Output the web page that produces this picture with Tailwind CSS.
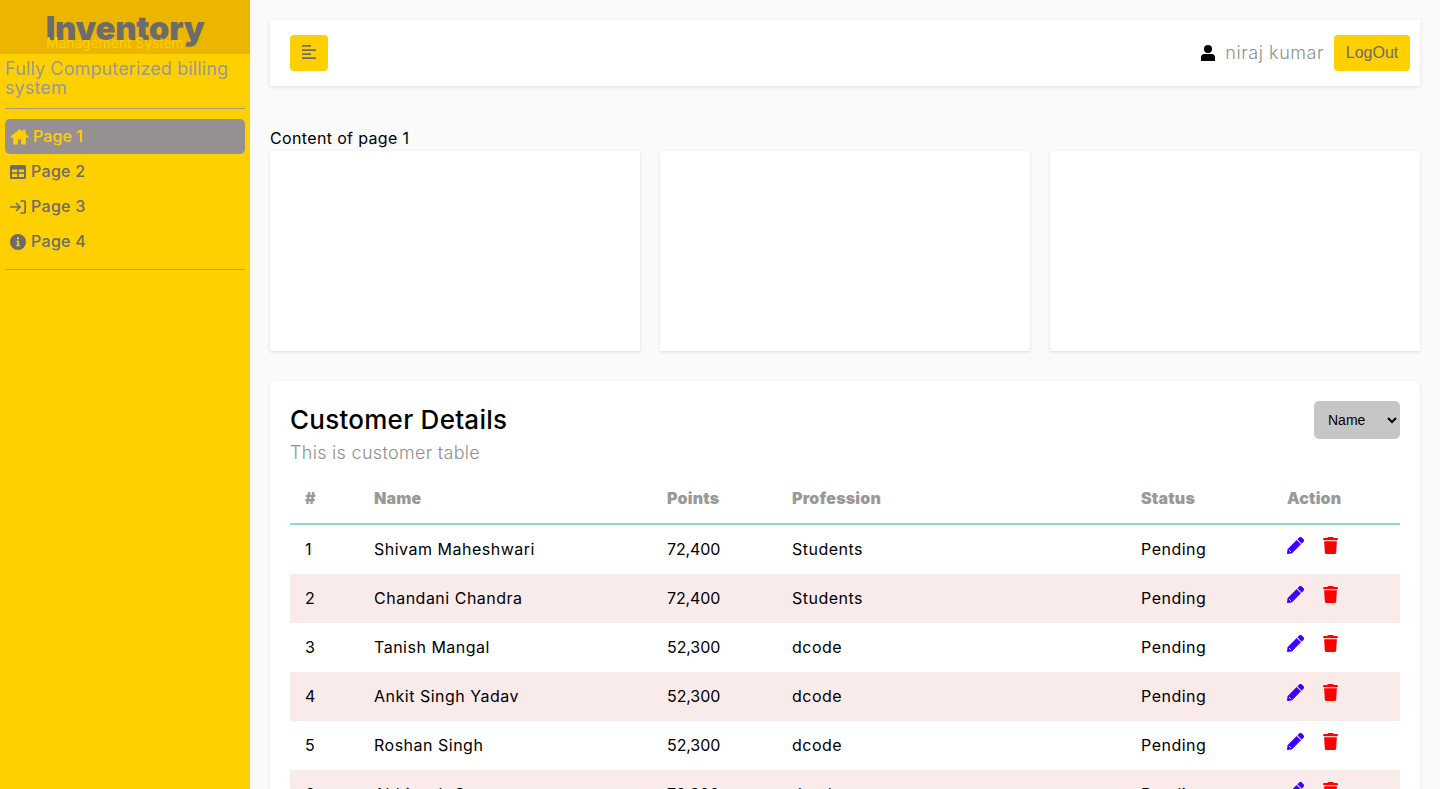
<!DOCTYPE html>
<html lang="en">
  <head>
    <meta charset="UTF-8" />
    <meta name="viewport" content="width=device-width, initial-scale=1.0" />
    <title>Inventory Management System</title>
    <script src="https://cdn.jsdelivr.net/npm/@tailwindcss/browser@4"></script>
  </head>
  <body class="h-screen overflow-hidden bg-[#fafafa] text-black font-['Inter',sans-serif] flex">
    <svg class="hidden">
      <symbol id="pencil" viewBox="0 0 512 512"><path fill="#3d00ff" d="M362 19a64 64 0 0 1 91 0l40 40a64 64 0 0 1 0 91l-50 50L312 69zM290 91 421 222 160 483c-7 7-15 12-25 15L24 511a18 18 0 0 1-23-23l13-111c3-10 8-18 15-25z"/><path d="M62 392 120 450" stroke="#ffffff" stroke-width="26" fill="none"/></symbol>
      <symbol id="trash" viewBox="0 0 448 512"><path fill="#ff0000" d="M135 18C140 7 151 0 163 0h122c12 0 23 7 28 18l7 14h96a32 32 0 0 1 0 64H32a32 32 0 0 1 0-64h96zM32 128h384l-21 339c-2 25-23 45-48 45H101c-25 0-46-20-48-45z"/></symbol>
    </svg>

    <!-- sidebar -->
    <aside class="w-[250px] shrink-0 h-full bg-[#ffd000]">
      <div class="h-[54px] bg-[#ecb500] flex flex-col items-center overflow-hidden pt-[9px]">
        <div class="w-[160px] h-[36px] relative">
          <div class="text-[33px] leading-[38px] font-black text-[#6c6c6c] tracking-[-0.3px] whitespace-nowrap text-center">Inventory</div>
          <div class="absolute left-[1px] top-[25px] text-[13.8px] leading-[18px] text-[#ffd000] whitespace-nowrap">Management System</div>
        </div>
      </div>
      <div class="px-[5px]">
        <p class="text-[18px] leading-[19px] text-[#999999] tracking-[0.12px] pt-[5px] pb-[11px] border-b border-[#a29c87]">Fully Computerized billing system</p>
        <nav class="pt-[10px] pb-[10px] border-b border-[#a29c87] flex flex-col gap-0">
          <a class="h-[35px] rounded-[5px] bg-[#979090] text-[#ffd000] flex items-center pl-[5px] gap-[5px] text-[16px] font-medium tracking-[0.1px]">
            <svg viewBox="0 0 24 24" class="w-[19px] h-[19px]" fill="currentColor"><path d="M12 2.500 0.500 12.400 1.800 14 4 12.200V22h6v-6.500h4V22h6v-9.800l2.200 1.800 1.300-1.600L19.500 8.200V3.500h-3v2.100z"/></svg>
            <span class="-ml-[1px] pb-[2px]">Page 1</span>
          </a>
          <a class="h-[35px] text-[#6c6c6c] flex items-center pl-[5px] gap-[5px] text-[16px] font-medium tracking-[0.3px]">
            <svg viewBox="0 0 16 14" class="w-[16px] h-[14px]" fill="currentColor"><path fill-rule="evenodd" d="M1.500 0h13A1.500 1.500 0 0 1 16 1.500v11a1.500 1.500 0 0 1-1.500 1.500h-13A1.500 1.500 0 0 1 0 12.500v-11A1.500 1.500 0 0 1 1.500 0zM2 4.500v2.700h5.200V4.500zm6.800 0v2.700H14V4.500zM2 8.800V12h5.200V8.800zm6.800 0V12H14V8.800z"/></svg>
            <span class="pb-[2px]">Page 2</span>
          </a>
          <a class="h-[35px] text-[#6c6c6c] flex items-center pl-[5px] gap-[5px] text-[16px] font-medium tracking-[0.3px]">
            <svg viewBox="0 0 16 14" class="w-[16px] h-[14px]" fill="none" stroke="currentColor" stroke-width="1.700"><path d="M0 7h9.500M6 3l4 4-4 4"/><path d="M10.500 1H14a1.200 1.200 0 0 1 1.200 1.200v9.600A1.200 1.200 0 0 1 14 13h-3.500"/></svg>
            <span class="pb-[2px]">Page 3</span>
          </a>
          <a class="h-[35px] text-[#6c6c6c] flex items-center pl-[5px] gap-[5px] text-[16px] font-medium tracking-[0.3px]">
            <svg viewBox="0 0 16 16" class="w-[16px] h-[16px]"><circle cx="8" cy="8" r="8" fill="currentColor"/><path d="M7 3.200h2v2H7zM6.500 6.700h2.500v4.300h.8v1.300H6.300V11h.9V8h-.7z" fill="#ffd000"/></svg>
            <span class="pb-[1px]">Page 4</span>
          </a>
        </nav>
      </div>
    </aside>

    <!-- main -->
    <main class="flex-1 min-w-0 pl-[20px] pr-[20px] pt-[20px]">
      <header class="h-[66px] bg-white shadow-[0_1px_4px_rgba(0,0,0,0.1)] flex items-center justify-between pl-[20px] pr-[10px]">
        <button class="w-[38px] h-[36px] rounded-[4px] bg-[#ffd000] flex items-center justify-center">
          <svg viewBox="0 0 14 14" class="w-[14px] h-[14px] -mt-[2px]" fill="#6c6c6c"><path d="M0 0h9v1.700H0zM0 4.300h14V6H0zM0 8.300h9V10H0zM0 12.300h14V14H0z"/></svg>
        </button>
        <div class="flex items-center">
          <svg viewBox="0 0 14 16" class="w-[14px] h-[16px] mr-[10px]" fill="#000"><circle cx="7" cy="4" r="4"/><path d="M3.500 9h7A3.500 3.500 0 0 1 14 12.500V16H0v-3.500A3.500 3.500 0 0 1 3.500 9z"/></svg>
          <span class="text-[18px] font-light tracking-[0.55px] text-[#8f8f8f] mr-[10px] pb-[2px]">niraj kumar</span>
          <button class="w-[76px] h-[36px] rounded-[4px] bg-[#ffd000] text-[#6c6c6c] text-[16px] font-['Liberation_Sans',sans-serif]">LogOut</button>
        </div>
      </header>

      <p class="mt-[40px] text-[16px] leading-[24px] h-[25px] tracking-[0.35px]">Content of page 1</p>
      <div class="grid grid-cols-3 gap-[20px]">
        <div class="h-[200px] bg-white shadow-[0_1px_3px_rgba(0,0,0,0.12)]"></div>
        <div class="h-[200px] bg-white shadow-[0_1px_3px_rgba(0,0,0,0.12)]"></div>
        <div class="h-[200px] bg-white shadow-[0_1px_3px_rgba(0,0,0,0.12)]"></div>
      </div>

      <section class="mt-[30px] bg-white rounded-[5px] shadow-[0_1px_3px_rgba(0,0,0,0.12)] px-[20px] pt-[20px] pb-[20px]">
        <div class="flex items-start justify-between h-[68px]">
          <div>
            <h2 class="text-[26px] leading-[37px] font-medium tracking-[0.25px]">Customer Details</h2>
            <p class="text-[18px] leading-[28px] font-light text-[#8f8f8f] tracking-[0.3px] mt-[1px]">This is customer table</p>
          </div>
          <select class="w-[86px] h-[38px] rounded-[5px] bg-[#c6c6c6] text-[14px] font-['Liberation_Sans',sans-serif] pl-[10px] text-black">
            <option>Name</option>
          </select>
        </div>
        <table class="w-[1110px] table-fixed text-[16px] tracking-[0.5px] text-left border-collapse">
          <thead>
            <tr class="h-[55px] border-b-2 border-[#88dccd] text-[#999999] tracking-[0.2px]">
              <th class="w-[84px] pl-[15px] pt-[4px] font-black">#</th>
              <th class="w-[293px] pt-[4px] font-black">Name</th>
              <th class="w-[125px] pt-[4px] font-black">Points</th>
              <th class="w-[349px] pt-[4px] font-black">Profession</th>
              <th class="w-[146px] pt-[4px] font-black">Status</th>
              <th class="pt-[4px] font-black">Action</th>
            </tr>
          </thead>
          <tbody class="[&_td]:pb-[2px]">
            <tr class="h-[50px]"><td class="pl-[15px]">1</td><td>Shivam Maheshwari</td><td class="tracking-[-0.1px]">72,400</td><td>Students</td><td>Pending</td>
              <td><div class="flex gap-[19px] -mt-[7px]"><svg class="w-[17px] h-[17px]"><use href="#pencil"/></svg><svg class="w-[15px] h-[17px]"><use href="#trash"/></svg></div></td></tr>
            <tr class="h-[49px] bg-[#faebeb]"><td class="pl-[15px]">2</td><td>Chandani Chandra</td><td class="tracking-[-0.1px]">72,400</td><td>Students</td><td>Pending</td>
              <td><div class="flex gap-[19px] -mt-[7px]"><svg class="w-[17px] h-[17px]"><use href="#pencil"/></svg><svg class="w-[15px] h-[17px]"><use href="#trash"/></svg></div></td></tr>
            <tr class="h-[49px]"><td class="pl-[15px]">3</td><td>Tanish Mangal</td><td class="tracking-[-0.1px]">52,300</td><td>dcode</td><td>Pending</td>
              <td><div class="flex gap-[19px] -mt-[7px]"><svg class="w-[17px] h-[17px]"><use href="#pencil"/></svg><svg class="w-[15px] h-[17px]"><use href="#trash"/></svg></div></td></tr>
            <tr class="h-[49px] bg-[#faebeb]"><td class="pl-[15px]">4</td><td>Ankit Singh Yadav</td><td class="tracking-[-0.1px]">52,300</td><td>dcode</td><td>Pending</td>
              <td><div class="flex gap-[19px] -mt-[7px]"><svg class="w-[17px] h-[17px]"><use href="#pencil"/></svg><svg class="w-[15px] h-[17px]"><use href="#trash"/></svg></div></td></tr>
            <tr class="h-[49px]"><td class="pl-[15px]">5</td><td>Roshan Singh</td><td class="tracking-[-0.1px]">52,300</td><td>dcode</td><td>Pending</td>
              <td><div class="flex gap-[19px] -mt-[7px]"><svg class="w-[17px] h-[17px]"><use href="#pencil"/></svg><svg class="w-[15px] h-[17px]"><use href="#trash"/></svg></div></td></tr>
            <tr class="h-[49px] bg-[#faebeb]"><td class="pl-[15px]">6</td><td>Abhinash Gupta</td><td class="tracking-[-0.1px]">72,300</td><td>dcode</td><td>Pending</td>
              <td><div class="flex gap-[19px] -mt-[7px]"><svg class="w-[17px] h-[17px]"><use href="#pencil"/></svg><svg class="w-[15px] h-[17px]"><use href="#trash"/></svg></div></td></tr>
          </tbody>
        </table>
      </section>
    </main>
  </body>
</html>
